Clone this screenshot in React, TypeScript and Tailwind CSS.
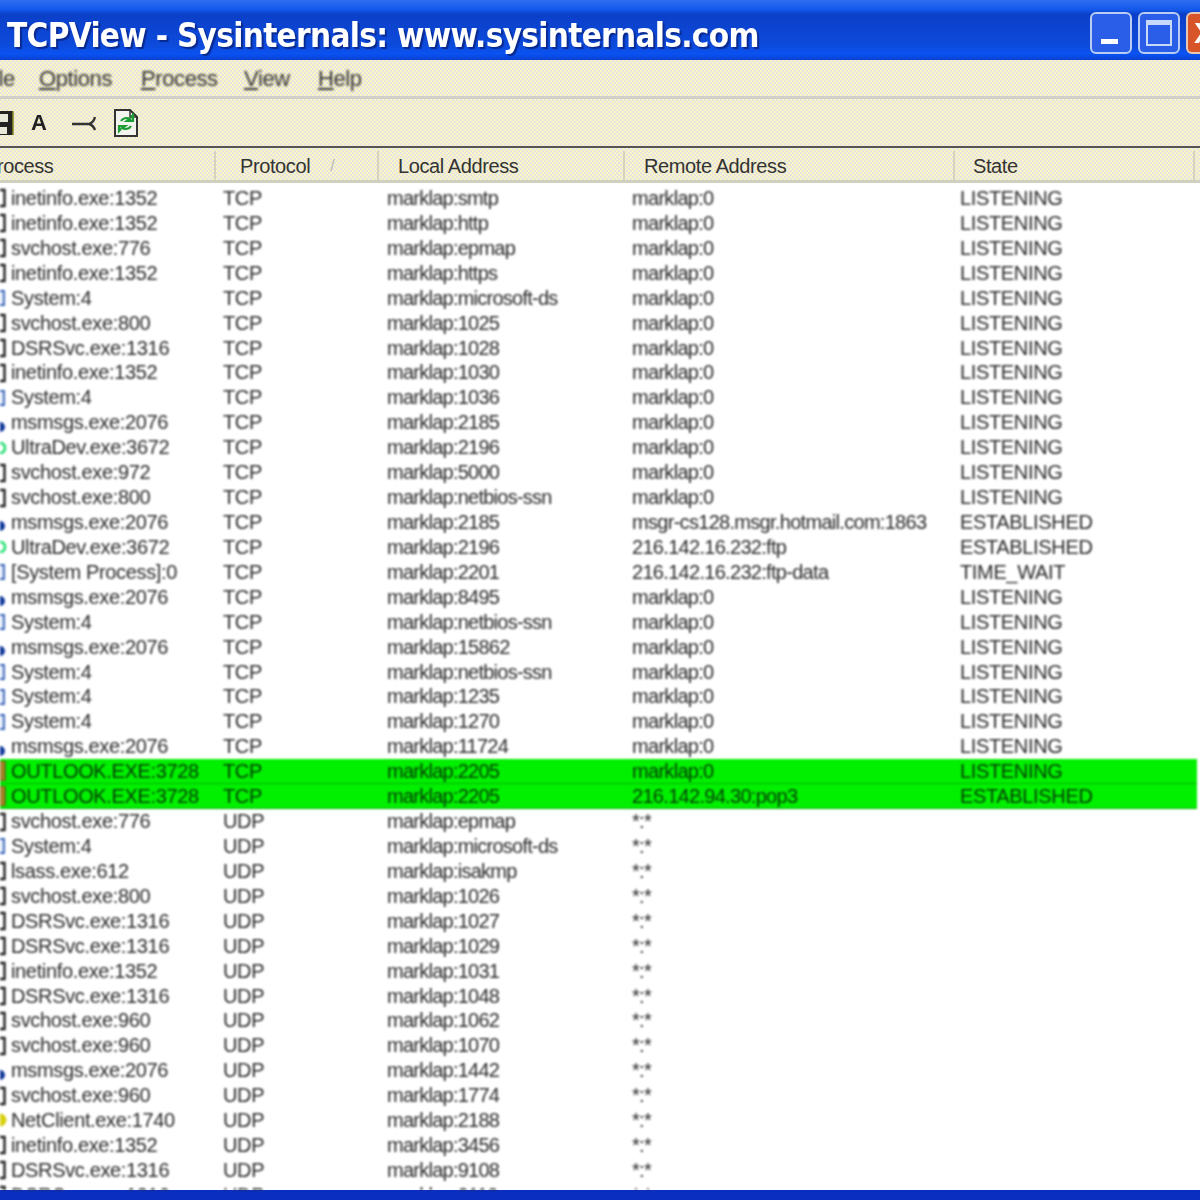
import React from 'react';

type Icon = 'app' | 'sys' | 'msn' | 'ultra' | 'mail' | 'net';
type Row = [Icon, string, string, string, string, string];

const L = 'LISTENING';
const E = 'ESTABLISHED';
const rows: Row[] = [
  ['app', 'inetinfo.exe:1352', 'TCP', 'marklap:smtp', 'marklap:0', L],
  ['app', 'inetinfo.exe:1352', 'TCP', 'marklap:http', 'marklap:0', L],
  ['app', 'svchost.exe:776', 'TCP', 'marklap:epmap', 'marklap:0', L],
  ['app', 'inetinfo.exe:1352', 'TCP', 'marklap:https', 'marklap:0', L],
  ['sys', 'System:4', 'TCP', 'marklap:microsoft-ds', 'marklap:0', L],
  ['app', 'svchost.exe:800', 'TCP', 'marklap:1025', 'marklap:0', L],
  ['app', 'DSRSvc.exe:1316', 'TCP', 'marklap:1028', 'marklap:0', L],
  ['app', 'inetinfo.exe:1352', 'TCP', 'marklap:1030', 'marklap:0', L],
  ['sys', 'System:4', 'TCP', 'marklap:1036', 'marklap:0', L],
  ['msn', 'msmsgs.exe:2076', 'TCP', 'marklap:2185', 'marklap:0', L],
  ['ultra', 'UltraDev.exe:3672', 'TCP', 'marklap:2196', 'marklap:0', L],
  ['app', 'svchost.exe:972', 'TCP', 'marklap:5000', 'marklap:0', L],
  ['app', 'svchost.exe:800', 'TCP', 'marklap:netbios-ssn', 'marklap:0', L],
  ['msn', 'msmsgs.exe:2076', 'TCP', 'marklap:2185', 'msgr-cs128.msgr.hotmail.com:1863', E],
  ['ultra', 'UltraDev.exe:3672', 'TCP', 'marklap:2196', '216.142.16.232:ftp', E],
  ['sys', '[System Process]:0', 'TCP', 'marklap:2201', '216.142.16.232:ftp-data', 'TIME_WAIT'],
  ['msn', 'msmsgs.exe:2076', 'TCP', 'marklap:8495', 'marklap:0', L],
  ['sys', 'System:4', 'TCP', 'marklap:netbios-ssn', 'marklap:0', L],
  ['msn', 'msmsgs.exe:2076', 'TCP', 'marklap:15862', 'marklap:0', L],
  ['sys', 'System:4', 'TCP', 'marklap:netbios-ssn', 'marklap:0', L],
  ['sys', 'System:4', 'TCP', 'marklap:1235', 'marklap:0', L],
  ['sys', 'System:4', 'TCP', 'marklap:1270', 'marklap:0', L],
  ['msn', 'msmsgs.exe:2076', 'TCP', 'marklap:11724', 'marklap:0', L],
  ['mail', 'OUTLOOK.EXE:3728', 'TCP', 'marklap:2205', 'marklap:0', L],
  ['mail', 'OUTLOOK.EXE:3728', 'TCP', 'marklap:2205', '216.142.94.30:pop3', E],
  ['app', 'svchost.exe:776', 'UDP', 'marklap:epmap', '*:*', ''],
  ['sys', 'System:4', 'UDP', 'marklap:microsoft-ds', '*:*', ''],
  ['app', 'lsass.exe:612', 'UDP', 'marklap:isakmp', '*:*', ''],
  ['app', 'svchost.exe:800', 'UDP', 'marklap:1026', '*:*', ''],
  ['app', 'DSRSvc.exe:1316', 'UDP', 'marklap:1027', '*:*', ''],
  ['app', 'DSRSvc.exe:1316', 'UDP', 'marklap:1029', '*:*', ''],
  ['app', 'inetinfo.exe:1352', 'UDP', 'marklap:1031', '*:*', ''],
  ['app', 'DSRSvc.exe:1316', 'UDP', 'marklap:1048', '*:*', ''],
  ['app', 'svchost.exe:960', 'UDP', 'marklap:1062', '*:*', ''],
  ['app', 'svchost.exe:960', 'UDP', 'marklap:1070', '*:*', ''],
  ['msn', 'msmsgs.exe:2076', 'UDP', 'marklap:1442', '*:*', ''],
  ['app', 'svchost.exe:960', 'UDP', 'marklap:1774', '*:*', ''],
  ['net', 'NetClient.exe:1740', 'UDP', 'marklap:2188', '*:*', ''],
  ['app', 'inetinfo.exe:1352', 'UDP', 'marklap:3456', '*:*', ''],
  ['app', 'DSRSvc.exe:1316', 'UDP', 'marklap:9108', '*:*', ''],
  ['app', 'DSRSvc.exe:1316', 'UDP', 'marklap:9110', '*:*', ''],
];

const dither = 'bg-[repeating-conic-gradient(#f8f6c4_0_25%,#e8e3e0_0_50%)] bg-[length:4px_4px]';

function RowIcon({ kind }: { kind: Icon }) {
  return (
    <svg width="7" height="20" viewBox="0 0 7 20" className="shrink-0">
      {kind === 'app' && <path d="M0 2h4.5v16H0" fill="none" stroke="#222" strokeWidth="2.4" />}
      {kind === 'sys' && <path d="M0 3h4v14H0" fill="#dfe8f8" stroke="#3a64b8" strokeWidth="1.8" />}
      {kind === 'msn' && <circle cx="0" cy="14" r="5" fill="#123a9c" />}
      {kind === 'ultra' && <path d="M0 5c4 0 5 3 5 5s-1 5-5 5" fill="none" stroke="#22e070" strokeWidth="2.6" />}
      {kind === 'mail' && <path d="M0 0h5v20H0z" fill="#b08a2a" stroke="#5a4a10" strokeWidth="1.2" />}
      {kind === 'net' && <circle cx="0" cy="9" r="6.5" fill="#d8d010" />}
    </svg>
  );
}

function HeaderCell({ label, className, children }: { label: string; className: string; children?: React.ReactNode }) {
  return (
    <div className={`flex items-center border-r-2 border-[#d6d4be] ${className}`}>
      <span>{label}</span>
      {children}
    </div>
  );
}

export default function App() {
  return (
    <div className="w-[1200px] h-[1200px] overflow-hidden flex flex-col bg-white text-[20px] text-[#2a2a2a] font-['Liberation_Sans',Arial,sans-serif]">
      {/* title bar */}
      <div className="h-[60px] shrink-0 flex items-center pl-[7px] bg-[linear-gradient(#2f6ff2_0,#1257ea_10px,#0b3fc8_14px,#0d4bdc_46px,#0a52f2_54px,#0840d0_60px)]">
        <span className="flex-1 pt-[11px] text-[33px] font-bold text-white tracking-[-0.7px] whitespace-nowrap font-['DejaVu_Sans_Condensed','Liberation_Sans',sans-serif] blur-[0.7px] [text-shadow:2px_2px_1px_#0a2a90]">
          TCPView - Sysinternals: www.sysinternals.com
        </span>
        <div className="flex gap-[6px] -mr-[28px] pt-[6px] blur-[0.5px]">
          <div className="w-[42px] h-[42px] rounded-[6px] border-2 border-[#b8ccf4] bg-[#2b5ee8] flex items-end pl-[9px] pb-[8px]">
            <div className="w-[17px] h-[5px] bg-white" />
          </div>
          <div className="w-[42px] h-[42px] rounded-[6px] border-2 border-[#b8ccf4] bg-[#2b5ee8] flex items-center justify-center">
            <div className="w-[26px] h-[26px] border-2 border-t-[5px] border-[#c8d8f8]" />
          </div>
          <div className="w-[42px] h-[42px] rounded-[6px] border-2 border-[#e8c8b0] bg-[#d8552a] flex items-center pl-[6px] text-white font-bold text-[30px] leading-none">
            X
          </div>
        </div>
      </div>

      {/* menu */}
      <div className={`h-[36px] shrink-0 flex items-center text-[22px] tracking-[-0.4px] text-[#333] ${dither}`}>
        <span className="w-[39px] -ml-[19px] box-content blur-[0.8px]">File</span>
        <span className="ml-[19px] w-[102px] blur-[0.8px]"><span className="underline">O</span>ptions</span>
        <span className="w-[103px] blur-[0.8px]"><span className="underline">P</span>rocess</span>
        <span className="w-[74px] blur-[0.8px]"><span className="underline">V</span>iew</span>
        <span className="blur-[0.8px]"><span className="underline">H</span>elp</span>
      </div>
      <div className="h-[3px] shrink-0 bg-[#d0d0c8]" />

      {/* toolbar */}
      <div className={`h-[49px] shrink-0 flex items-center border-b-[2px] border-[#555] ${dither}`}>
        <svg width="14" height="26" viewBox="0 0 14 26" className="shrink-0">
          <path d="M0 1h13v24H0z" fill="#222" />
          <path d="M0 4h8v8H0z" fill="#e8e8d8" />
          <path d="M0 17h7v7H0z" fill="#e8e8d8" />
          <path d="M13 1v24" stroke="#8a8a20" strokeWidth="1.5" />
        </svg>
        <span className="ml-[17px] w-[17px] font-bold text-[22px] text-[#222] leading-none blur-[0.5px]">A</span>
        <svg width="26" height="20" viewBox="0 0 26 20" className="ml-[24px] shrink-0">
          <path d="M0 11h17M23 4c-1 4-3 6-6 7 3 1 5 3 6 6" fill="none" stroke="#333" strokeWidth="2.4" />
        </svg>
        <svg width="26" height="30" viewBox="0 0 26 30" className="ml-[15px] shrink-0">
          <path d="M2 2h15l7 7v19H2z" fill="#f4f4ee" stroke="#333" strokeWidth="2" />
          <path d="M17 2v7h7" fill="none" stroke="#333" strokeWidth="1.5" />
          <path d="M8 13a6 5 0 0 1 9-2l-3 2h6v-6l-2 2" fill="none" stroke="#1c9c34" strokeWidth="2.2" />
          <path d="M18 18a6 5 0 0 1-9 2l3-2H6v5l2-2" fill="none" stroke="#1c9c34" strokeWidth="2.2" />
        </svg>
      </div>

      {/* column headers */}
      <div className={`h-[35px] shrink-0 flex pt-[3px] tracking-[-0.4px] text-[#333] border-b-[3px] border-[#d0d0c0] ${dither}`}>
        <HeaderCell label="Process" className="w-[232px] -ml-[16px] box-border" />
        <HeaderCell label="Protocol" className="w-[163px] pl-[24px] box-border">
          <span className="ml-[20px] text-[#bbb] text-[16px]">/</span>
        </HeaderCell>
        <HeaderCell label="Local Address" className="w-[246px] pl-[19px] box-border" />
        <HeaderCell label="Remote Address" className="w-[330px] pl-[19px] box-border" />
        <HeaderCell label="State" className="w-[240px] pl-[18px] box-border" />
      </div>

      {/* connection list */}
      <div className="flex-1 min-h-0 overflow-hidden pt-[3px] tracking-[-0.35px] blur-[0.8px]">
        {rows.map((r, i) => {
          const hit = r[0] === 'mail';
          return (
            <div
              key={i}
              className={`h-[24.93px] leading-[24.93px] flex whitespace-nowrap ${hit ? 'mr-[3px] bg-[#00f000] text-[#063a06] border-b border-[#00b400]' : ''}`}
            >
              <div className="w-[223px] flex items-center">
                <RowIcon kind={r[0]} />
                <span className="ml-[4px]">{r[1]}</span>
              </div>
              <div className="w-[164px]">{r[2]}</div>
              <div className="w-[245px] tracking-[-0.75px]">{r[3]}</div>
              <div className="w-[328px] tracking-[-0.7px]">{r[4]}</div>
              <div>{r[5]}</div>
            </div>
          );
        })}
      </div>

      {/* bottom edge of the window */}
      <div className="h-[10px] shrink-0 bg-[#0a2fc0]" />
    </div>
  );
}
